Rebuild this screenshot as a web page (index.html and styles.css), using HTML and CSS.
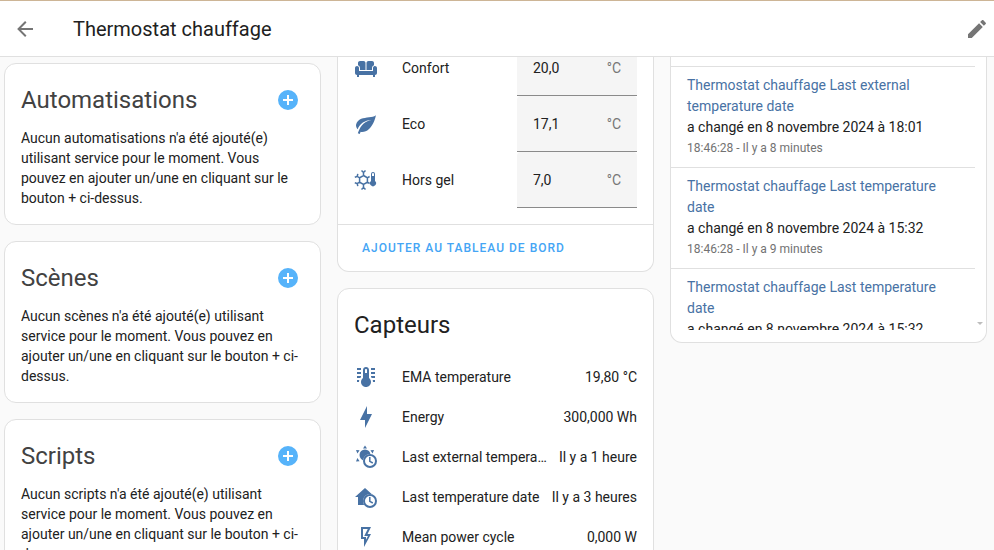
FILE: index.html
```html
<!DOCTYPE html>
<html lang="fr">
<head>
  <meta charset="UTF-8">
  <meta name="viewport" content="width=device-width, initial-scale=1.0">
  <title>Thermostat chauffage</title>
  <link rel="stylesheet" href="styles.css">
</head>
<body>

  <header class="toolbar">
    <button class="icon-button" aria-label="Retour">
      <svg class="icon" viewBox="0 0 24 24"><path d="M20,11V13H8L13.5,18.5L12.08,19.92L4.16,12L12.08,4.08L13.5,5.5L8,11H20Z"/></svg>
    </button>
    <h1 class="title">Thermostat chauffage</h1>
    <button class="icon-button" aria-label="Modifier">
      <svg class="icon" viewBox="0 0 24 24"><path d="M20.71,7.04C21.1,6.65 21.1,6 20.71,5.63L18.37,3.29C18,2.9 17.35,2.9 16.96,3.29L15.12,5.12L18.87,8.87M3,17.25V21H6.75L17.81,9.93L14.06,6.18L3,17.25Z"/></svg>
    </button>
  </header>

  <main class="content">

    <!-- Automations, scenes, scripts -->
    <div class="column">
      <section class="card">
        <div class="card-header">
          <h2>Automatisations</h2>
          <button class="add-button" aria-label="Ajouter une automatisation">
            <svg class="icon" viewBox="0 0 24 24"><path d="M17,13H13V17H11V13H7V11H11V7H13V11H17M12,2A10,10 0 0,0 2,12A10,10 0 0,0 12,22A10,10 0 0,0 22,12A10,10 0 0,0 12,2Z"/></svg>
          </button>
        </div>
        <p class="card-text">Aucun automatisations n'a été ajouté(e) utilisant service pour le moment. Vous pouvez en ajouter un/une en cliquant sur le bouton + ci-dessus.</p>
      </section>

      <section class="card">
        <div class="card-header">
          <h2>Scènes</h2>
          <button class="add-button" aria-label="Ajouter une scène">
            <svg class="icon" viewBox="0 0 24 24"><path d="M17,13H13V17H11V13H7V11H11V7H13V11H17M12,2A10,10 0 0,0 2,12A10,10 0 0,0 12,22A10,10 0 0,0 22,12A10,10 0 0,0 12,2Z"/></svg>
          </button>
        </div>
        <p class="card-text">Aucun scènes n'a été ajouté(e) utilisant service pour le moment. Vous pouvez en ajouter un/une en cliquant sur le bouton + ci-dessus.</p>
      </section>

      <section class="card">
        <div class="card-header">
          <h2>Scripts</h2>
          <button class="add-button" aria-label="Ajouter un script">
            <svg class="icon" viewBox="0 0 24 24"><path d="M17,13H13V17H11V13H7V11H11V7H13V11H17M12,2A10,10 0 0,0 2,12A10,10 0 0,0 12,22A10,10 0 0,0 22,12A10,10 0 0,0 12,2Z"/></svg>
          </button>
        </div>
        <p class="card-text">Aucun scripts n'a été ajouté(e) utilisant service pour le moment. Vous pouvez en ajouter un/une en cliquant sur le bouton + ci-dessus.</p>
      </section>
    </div>

    <!-- Presets and sensors -->
    <div class="column column-scrolled">
      <section class="card card-cut">
        <div class="presets">
          <div class="row">
            <svg class="icon" viewBox="0 0 24 24"><path d="M12.5 7C12.5 5.89 13.39 5 14.5 5H18C19.1 5 20 5.9 20 7V9.16C18.84 9.57 18 10.67 18 11.97V14H12.5V7M6 11.96V14H11.5V7C11.5 5.89 10.61 5 9.5 5H6C4.9 5 4 5.9 4 7V9.15C5.16 9.56 6 10.67 6 11.96M20.66 10.03C19.68 10.19 19 11.12 19 12.12V15H5V12C5 11.47 4.79 10.96 4.41 10.59S3.53 10 3 10 2 10.21 1.59 10.59 1 11.47 1 12V17C1 18.1 1.9 19 3 19V21H5V19H19V21H21V19C22.1 19 23 18.1 23 17V12C23 10.9 21.79 9.85 20.66 10.03Z"/></svg>
            <label class="name" for="confort">Confort</label>
            <div class="field">
              <input id="confort" type="text" value="20,0">
              <span class="unit">°C</span>
            </div>
          </div>
          <div class="row">
            <svg class="icon" viewBox="0 0 24 24"><path d="M17,8C8,10 5.9,16.17 3.82,21.34L5.71,22L6.66,19.7C7.14,19.87 7.64,20 8,20C19,20 22,3 22,3C21,5 14,5.25 9,6.25C4,7.25 2,11.5 2,13.5C2,15.5 3.75,17.25 3.75,17.25C7,8 17,8 17,8Z"/></svg>
            <label class="name" for="eco">Eco</label>
            <div class="field">
              <input id="eco" type="text" value="17,1">
              <span class="unit">°C</span>
            </div>
          </div>
          <div class="row">
            <svg class="icon" viewBox="0 0 24 24">
              <path class="stroke snow" d="M9.5,7.5L13.4,9.8V14.2L9.5,16.5L5.6,14.2V9.8ZM9.5,7.5V4.5M9.5,16.5V19.5M7.5,2.5L9.5,4.5L11.5,2.5M7.5,21.5L9.5,19.5L11.5,21.5M5.6,9.8L3.2,8.4M5.6,14.2L3.2,15.6M3.8,5.8L3.2,8.4L0.8,9.2M3.8,18.2L3.2,15.6L0.8,14.8M13.4,9.8L15.6,8.5M13.4,14.2L15.6,15.5"/>
              <path d="M21,13V6A2,2 0 0,0 17,6V13A3,3 0 1,0 21,13M19,5A1,1 0 0,1 20,6V8H18V6A1,1 0 0,1 19,5Z"/>
            </svg>
            <label class="name" for="hors-gel">Hors gel</label>
            <div class="field">
              <input id="hors-gel" type="text" value="7,0">
              <span class="unit">°C</span>
            </div>
          </div>
        </div>
        <div class="card-actions">
          <button class="text-button">Ajouter au tableau de bord</button>
        </div>
      </section>

      <section class="card">
        <h2 class="sensors-title">Capteurs</h2>
        <div class="sensors">
          <div class="row">
            <svg class="icon" viewBox="0 0 24 24"><path d="M17 3H21V5H17V3M17 7H21V9H17V7M17 11H21V13H17.75L17 12.1V11M21 15V17H19C19 16.31 18.9 15.63 18.71 15H21M17 17C17 19.8 14.8 22 12 22S7 19.8 7 17C7 15.4 7.8 13.9 9 13V5C9 3.3 10.3 2 12 2S15 3.3 15 5V13C16.2 13.9 17 15.4 17 17M13 8V5C13 4.4 12.6 4 12 4S11 4.4 11 5V8H13M7 3H3V5H7V3M7 7H3V9H7V7M7 11H3V13H6.25L7 12.1V11M3 15V17H5C5 16.31 5.1 15.63 5.29 15H3Z"/></svg>
            <span class="name">EMA temperature</span>
            <span class="value">19,80 °C</span>
          </div>
          <div class="row">
            <svg class="icon" viewBox="0 0 24 24"><path d="M11 15H6L13 1V9H18L11 23V15Z"/></svg>
            <span class="name">Energy</span>
            <span class="value">300,000 Wh</span>
          </div>
          <div class="row">
            <svg class="icon" viewBox="0 0 24 24">
              <path d="M11,0.5L13,3.5H9ZM2,5L5.6,5.3L3.4,8.4ZM20,5L16.4,5.3L18.6,8.4ZM2,16.5L3.4,13L5.6,16.2Z"/>
              <circle cx="11" cy="10" r="5.5"/>
              <circle class="gap" cx="16" cy="16" r="7"/>
              <circle class="stroke" cx="16" cy="16" r="6"/>
              <path class="stroke hands" d="M15.8,12V16.3L18.8,18"/>
            </svg>
            <span class="name">Last external temperature date</span>
            <span class="value">Il y a 1 heure</span>
          </div>
          <div class="row">
            <svg class="icon" viewBox="0 0 24 24">
              <path d="M11,3L1,12H4V20H18V12H21Z"/>
              <circle class="gap" cx="16" cy="16" r="7"/>
              <circle class="stroke" cx="16" cy="16" r="6"/>
              <path class="stroke hands" d="M15.8,12V16.3L18.8,18"/>
            </svg>
            <span class="name">Last temperature date</span>
            <span class="value">Il y a 3 heures</span>
          </div>
          <div class="row">
            <svg class="icon" viewBox="0 0 24 24"><path d="M7,2H17L13.5,9H17L10,22V14H7V2M9,4V12H12V14.66L14,11H10.24L13.76,4H9Z"/></svg>
            <span class="name">Mean power cycle</span>
            <span class="value">0,000 W</span>
          </div>
        </div>
      </section>
    </div>

    <!-- Logbook -->
    <div class="column column-logbook">
      <section class="card card-cut logbook">
        <div class="log-list">
          <div class="log-entry">
            <a href="#">Thermostat chauffage Last external temperature date</a>
            <div>a changé en 8 novembre 2024 à 18:01</div>
            <div class="log-time">18:46:28 - Il y a 8 minutes</div>
          </div>
          <div class="log-entry">
            <a href="#">Thermostat chauffage Last temperature date</a>
            <div>a changé en 8 novembre 2024 à 15:32</div>
            <div class="log-time">18:46:28 - Il y a 9 minutes</div>
          </div>
          <div class="log-entry">
            <a href="#">Thermostat chauffage Last temperature date</a>
            <div>a changé en 8 novembre 2024 à 15:32</div>
          </div>
        </div>
        <span class="scroll-arrow"></span>
      </section>
    </div>

  </main>

</body>
</html>
```
FILE: styles.css
```css
* {
  box-sizing: border-box;
}

body {
  margin: 0;
  height: 100vh;
  display: flex;
  flex-direction: column;
  overflow: hidden;
  background: #fafafa;
  color: #212121;
  font-family: Roboto, sans-serif;
  font-size: 14px;
  line-height: 20px;
}

h1, h2, p {
  margin: 0;
  font-weight: 400;
}

button {
  border: none;
  background: none;
  padding: 0;
  font-family: inherit;
  cursor: pointer;
}

.icon {
  display: block;
  flex: none;
  width: 24px;
  height: 24px;
  fill: currentColor;
}

.icon .stroke {
  fill: none;
  stroke: currentColor;
  stroke-width: 2;
}

.icon .hands,
.icon .snow {
  stroke-width: 1.5;
}

.icon .gap {
  fill: #fff;
}

/* Toolbar */
.toolbar {
  flex: none;
  display: flex;
  align-items: center;
  height: 57px;
  padding: 0 5px 0 13px;
  background: #fff;
  border-top: 1px solid #cdb596;
  border-bottom: 1px solid #e0e0e0;
}

.icon-button {
  color: #757575;
}

.title {
  flex: 1;
  margin-left: 36px;
  font-size: 20px;
  line-height: 24px;
}

/* Columns */
.content {
  flex: 1;
  min-height: 0;
  display: grid;
  grid-template-columns: repeat(3, minmax(0, 1fr));
  align-items: start;
  gap: 16px;
  padding: 0 7px 0 4px;
  overflow: hidden;
}

.column {
  display: flex;
  flex-direction: column;
  gap: 16px;
  padding-top: 6px;
}

.column-scrolled {
  margin-top: -17px;
  padding-top: 0;
}

.column-logbook {
  padding-top: 0;
}

/* Cards */
.card {
  background: #fff;
  border: 1px solid #e0e0e0;
  border-radius: 12px;
}

.card-cut {
  border-top: none;
  border-top-left-radius: 0;
  border-top-right-radius: 0;
}

.card-header {
  display: flex;
  align-items: center;
  justify-content: space-between;
  padding: 20px 20px 12px 16px;
  color: #424242;
}

.card-header h2,
.sensors-title {
  font-size: 24px;
  line-height: 32px;
}

.add-button {
  color: #56b3fa;
}

.card-text {
  padding: 0 16px 16px;
}

.presets {
  padding: 0 16px 16px;
}

.row {
  display: flex;
  align-items: center;
  color: #4872a4;
}

.name {
  flex: 1;
  margin-left: 24px;
  overflow: hidden;
  white-space: nowrap;
  text-overflow: ellipsis;
  color: #212121;
}

.value {
  margin-left: 8px;
  white-space: nowrap;
  color: #212121;
}

.field {
  display: flex;
  align-items: center;
  width: 120px;
  height: 56px;
  padding: 0 16px;
  background: #f5f5f5;
  border-bottom: 1px solid #8a8a8a;
  border-radius: 4px 4px 0 0;
}

.field input {
  flex: 1;
  min-width: 0;
  padding: 0;
  border: none;
  outline: none;
  background: none;
  color: #212121;
  font: inherit;
}

.unit {
  color: #757575;
}

.card-actions {
  padding: 5px 16px;
  border-top: 1px solid #e0e0e0;
}

.text-button {
  height: 36px;
  padding: 0 8px;
  color: #44a5f5;
  font-size: 12px;
  font-weight: 500;
  letter-spacing: 1px;
  text-transform: uppercase;
}

.sensors-title {
  padding: 20px 16px 16px;
}

.sensors {
  padding: 0 16px 16px;
}

.sensors .row {
  height: 40px;
}

/* Logbook */
.logbook {
  position: relative;
  padding: 0 11px 12px 0;
}

.log-list {
  height: 273px;
  padding-top: 9px;
  overflow: hidden;
}

.log-entry {
  padding: 8px 16px;
  border-top: 1px solid #e0e0e0;
  line-height: 21px;
}

.log-entry a {
  color: #4872a4;
  text-decoration: none;
}

.log-time {
  color: #727272;
  font-size: 12px;
}

.scroll-arrow {
  position: absolute;
  right: 3px;
  bottom: 17px;
  border: 3px solid transparent;
  border-top-color: #bdbdbd;
  border-bottom: none;
}
```
